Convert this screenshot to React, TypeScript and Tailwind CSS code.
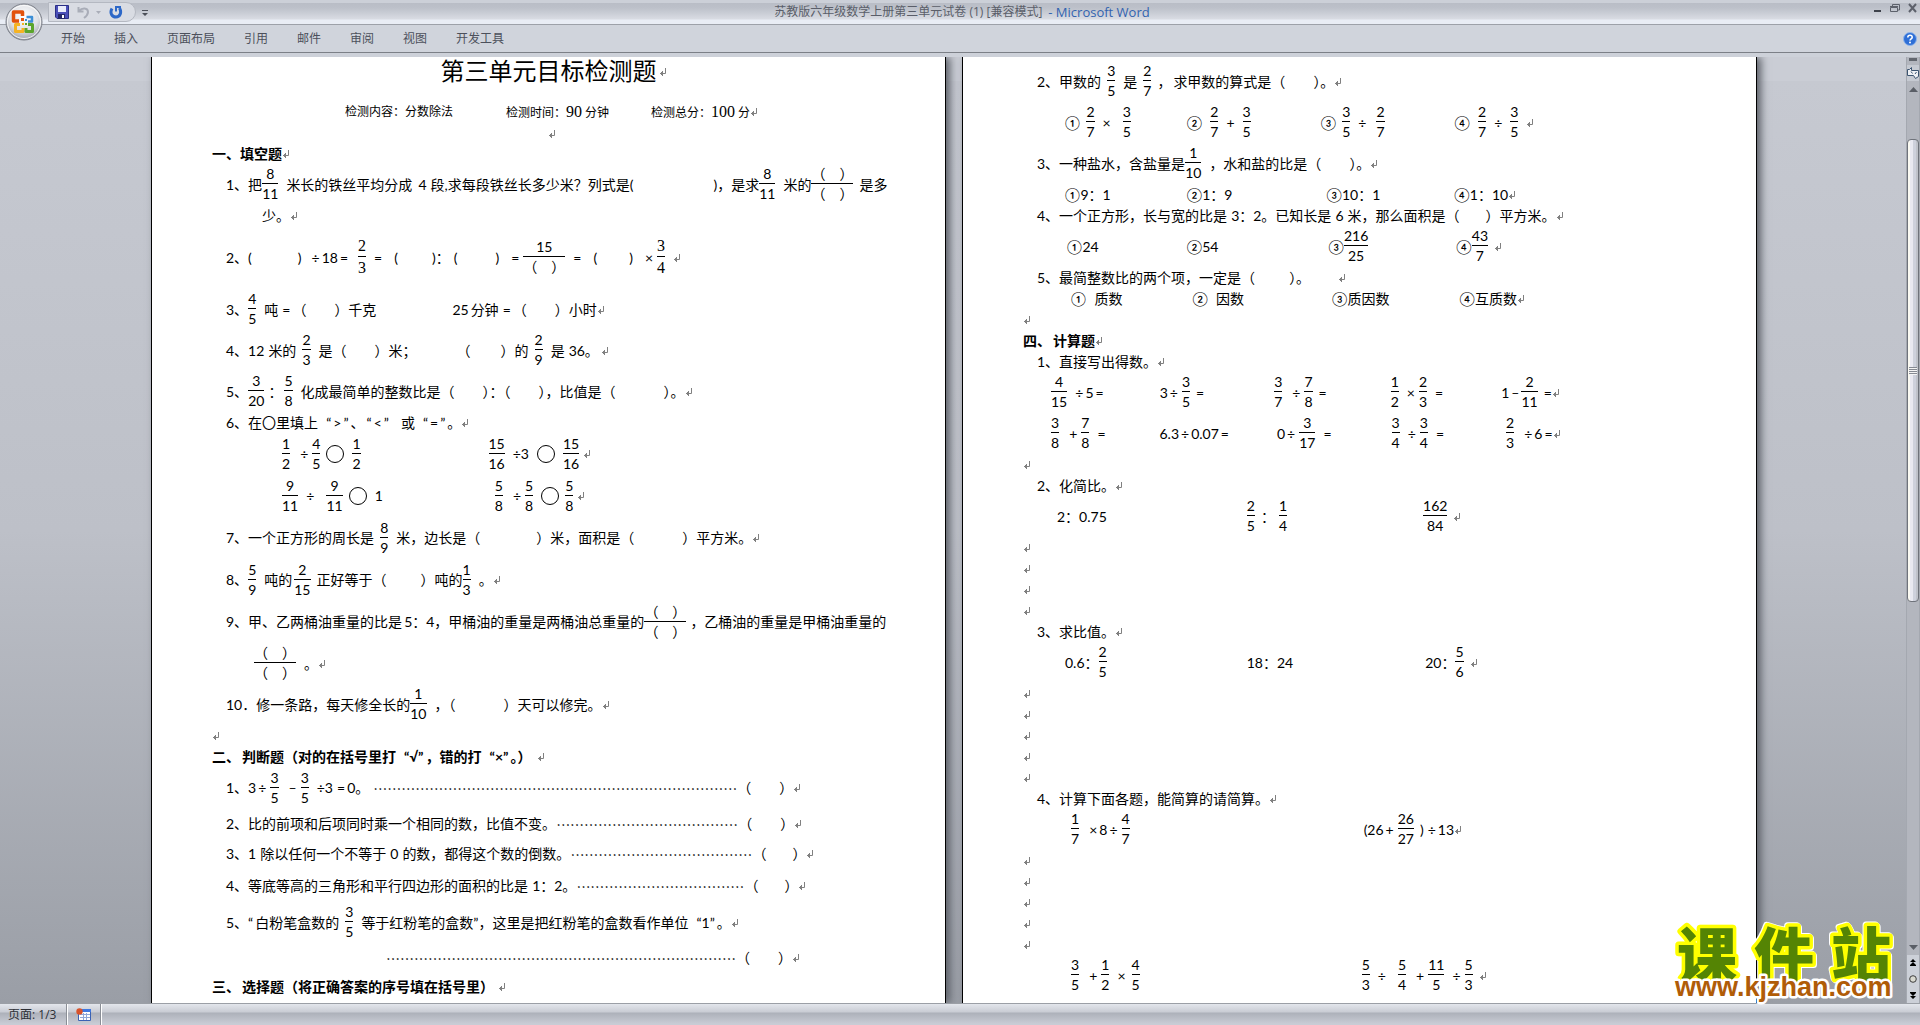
import { Fragment } from "react";
import { clsx } from "clsx";

const TABS = ["开始", "插入", "页面布局", "引用", "邮件", "审阅", "视图", "开发工具"];

type LineData = {
  text: string;
  /** "text" = one grid row, "frac" = row tall enough for a fraction. */
  size?: "text" | "frac" | "wide" | "tall" | "mid" | "loose";
  heading?: boolean;
};

const LINE_HEIGHT = {
  text: "h-[21px]",
  frac: "h-[41px]",
  wide: "h-[42px]",
  tall: "h-[63px]",
  mid: "h-[29px]",
  loose: "h-[32px]",
};

/**
 * Line markup: {a/b} is a fraction ({*a/b} the serif one), [n] a blank of n
 * pixels, ○ the circle to fill in, ↵ the paragraph mark.
 */
const LEFT_LINES: LineData[] = [
  { text: "一、填空题↵", heading: true },
  {
    text: "1、把{8/11}[8]米长的铁丝平均分成[6]4[4]段,求每段铁丝长多少米？列式是([80])，是求{8/11}[8]米的{（　）/（　）}[6]是多",
    size: "frac",
  },
  { text: "[36]少。↵" },
  {
    text: "2、([46])[10]÷[2]18[2]=[10]{*2/3}[8]=[12]([34])：[4]([38])[12]=[4]{15/（　）}[8]=[12]([32])[12]×[4]{*3/4}[8]↵",
    size: "tall",
  },
  { text: "3、{4/5}[8]吨[4]=[2]（[28]）千克[76]25[2]分钟[4]=[2]（[28]）小时↵", size: "frac" },
  { text: "4、12[4]米的[6]{2/3}[8]是（[28]）米；[40]（[30]）的[6]{2/9}[8]是[4]36。[2]↵", size: "frac" },
  { text: "5、{3/20}[4]：[2]{5/8}[8]化成最简单的整数比是（[28]）：（[28]），比值是（[48]）。↵", size: "frac" },
  { text: "6、在〇里填上[8]“[2]>[2]”[2]、[2]“[2]<[2]”[12]或[8]“[2]=[2]”[2]。↵" },
  { text: "[56]{1/2}[10]÷[4]{4/5}[6]○[8]{1/2}[128]{15/16}[8]÷3[8]○[8]{15/16}[4]↵", size: "wide" },
  { text: "[56]{9/11}[8]÷[12]{9/11}[6]○[8]1[112]{5/8}[10]÷[4]{5/8}[8]○[6]{5/8}[4]↵", size: "wide" },
  { text: "7、一个正方形的周长是[6]{8/9}[8]米，边长是（[56]）米，面积是（[48]）平方米。↵", size: "wide" },
  { text: "8、{5/9}[8]吨的[2]{2/15}[6]正好等于（[34]）吨的{1/3}[8]。↵", size: "wide" },
  {
    text: "9、甲、乙两桶油重量的比是[2]5：4，甲桶油的重量是两桶油总重量的{（　）/（　）}[4]，乙桶油的重量是甲桶油重量的",
    size: "wide",
  },
  { text: "[28]{（　）/（　）}[8]。↵", size: "frac" },
  { text: "10．修一条路，每天修全长的{1/10}[8]，（[48]）天可以修完。↵", size: "frac" },
  { text: "↵", heading: true },
  { text: "二、[2]判断题（对的在括号里打[8]“√”[2]，错的打[8]“×”[2]。）[6]↵", heading: true },
  { text: `1、3[2]÷[4]{3/5}[10]–[4]{3/5}[8]÷3[4]=[2]0。[4]${"…".repeat(26)}（[28]）↵`, size: "wide" },
  { text: `2、比的前项和后项同时乘一个相同的数，比值不变。${"…".repeat(13)}（[28]）↵`, size: "mid" },
  { text: `3、1[4]除以任何一个不等于[4]0[4]的数，都得这个数的倒数。${"…".repeat(13)}（[26]）↵`, size: "loose" },
  { text: `4、等底等高的三角形和平行四边形的面积的比是[4]1：2。${"…".repeat(12)}（[26]）↵`, size: "loose" },
  { text: "5、“[2]白粉笔盒数的[6]{3/5}[8]等于红粉笔的盒数”，这里是把红粉笔的盒数看作单位[8]“1”[2]。↵", size: "frac" },
  { text: `[160]${"…".repeat(25)}（[28]）↵`, size: "mid" },
  { text: "三、[2]选择题（将正确答案的序号填在括号里）[4]↵", size: "mid", heading: true },
  { text: "[170]{1/2}", size: "frac" },
];

const EMPTY: LineData = { text: "↵", heading: true };

const RIGHT_LINES: LineData[] = [
  { text: "2、甲数的[6]{3/5}[8]是[6]{2/7}[6]，[2]求甲数的算式是（[28]）。↵", size: "frac" },
  {
    text: "[28]①[6]{2/7}[8]×[12]{3/5}[56]②[8]{2/7}[8]+[8]{3/5}[70]③[6]{3/5}[8]÷[10]{2/7}[70]④[8]{2/7}[8]÷[8]{3/5}[8]↵",
    size: "frac",
  },
  { text: "3、一种盐水，含盐量是{1/10}[8]，水和盐的比是（[28]）。↵", size: "frac" },
  { text: "[28]①9：1[76]②1：9[94]③10：1[74]④1：10↵" },
  { text: "4、一个正方形，长与宽的比是[4]3：2。已知长是[4]6[4]米，那么面积是（[26]）平方米。↵" },
  { text: "[30]①24[88]②54[110]③{216/25}[88]④{43/7}[6]↵", size: "frac" },
  { text: "5、最简整数比的两个项，一定是（[34]）。[28]↵" },
  { text: "[34]①[8]质数[70]②[8]因数[88]③质因数[70]④互质数↵" },
  EMPTY,
  { text: "四、[2]计算题↵", heading: true },
  { text: "1、直接写出得数。↵" },
  {
    text: "[14]{4/15}[8]÷[2]5[2]=[56]3[2]÷[4]{3/5}[6]=[70]{3/7}[10]÷[4]{7/8}[6]=[64]{1/2}[8]×[4]{2/3}[8]=[58]1[2]–[2]{2/11}[6]=↵",
    size: "frac",
  },
  {
    text: "[14]{3/8}[10]+[4]{7/8}[8]=[54]6.3[2]÷[2]0.07[2]=[48]0[2]÷[4]{3/17}[8]=[60]{3/4}[8]÷[4]{3/4}[8]=[62]{2/3}[10]÷[2]6[2]=↵",
    size: "frac",
  },
  EMPTY,
  { text: "2、化简比。↵" },
  { text: "[20]2：0.75[140]{2/5}[6]：[4]{1/4}[136]{162/84}[6]↵", size: "frac" },
  EMPTY,
  EMPTY,
  EMPTY,
  EMPTY,
  { text: "3、求比值。↵" },
  { text: "[28]0.6：{2/5}[140]18：24[132]20：{5/6}[6]↵", size: "frac" },
  EMPTY,
  EMPTY,
  EMPTY,
  EMPTY,
  EMPTY,
  { text: "4、计算下面各题，能简算的请简算。↵" },
  { text: "[34]{1/7}[10]×[2]8[2]÷[4]{4/7}[234](26[2]+[4]{26/27}[6])[4]÷[2]13↵", size: "frac" },
  EMPTY,
  EMPTY,
  EMPTY,
  EMPTY,
  EMPTY,
  { text: "[34]{3/5}[10]+[4]{1/2}[8]×[6]{4/5}[222]{5/3}[8]÷[12]{5/4}[10]+[4]{11/5}[8]÷[4]{5/3}[6]↵", size: "frac" },
];

function ReturnMark() {
  return (
    <svg aria-hidden width="8" height="10" viewBox="0 0 8 10" className="shrink-0" fill="none" stroke="#808080">
      <path d="M6.5 1v5.5H1M3.5 4v5M2.5 5v3" />
    </svg>
  );
}

function Fraction({ value }: { value: string }) {
  const serif = value.startsWith("*");
  const [top, bottom] = value.replace("*", "").split("/");
  return (
    <span
      className={clsx(
        "mb-0.5 flex shrink-0 flex-col items-center",
        serif ? "font-['Liberation_Serif',serif] text-base leading-[21px]" : "leading-[19px]",
      )}
    >
      <span>{top}</span>
      <span className="h-px w-full bg-black" />
      <span>{bottom}</span>
    </span>
  );
}

function Piece({ part }: { part: string }) {
  if (part === "↵") return <ReturnMark />;
  if (part === "○") return <span className="size-[18px] shrink-0 rounded-full border border-black" />;
  if (part.startsWith("{")) return <Fraction value={part.slice(1, -1)} />;
  if (part.startsWith("[")) return <span className="shrink-0" style={{ width: Number(part.slice(1, -1)) }} />;
  if (part.startsWith("…")) return <span className="font-['Noto_Sans_CJK_SC',sans-serif]">{part}</span>;
  return <span>{part}</span>;
}

function Line({ text, size = "text", heading }: LineData) {
  const parts = text.split(/(\{[^}]*\}|\[\d+\]|↵|○|…+)/).filter(Boolean);
  return (
    <div
      className={clsx(
        "flex shrink-0 items-center whitespace-pre",
        LINE_HEIGHT[size],
        heading ? "font-bold" : "pl-3.5",
      )}
    >
      {parts.map((part, i) => (
        <Fragment key={i}>
          <Piece part={part} />
        </Fragment>
      ))}
    </div>
  );
}

function Paper({ children }: { children: React.ReactNode }) {
  return (
    <article className="w-[795px] shrink-0 overflow-hidden border-x border-black bg-white pl-[60px] text-sm text-black shadow-[4px_0_8px_#5c6068]">
      {children}
    </article>
  );
}

function OfficeButton() {
  return (
    <button type="button" aria-label="Office 按钮" className="absolute top-[3px] left-[5px] z-10 size-[38px]">
      <svg viewBox="0 0 38 38" className="size-full">
        <defs>
          <radialGradient id="orb" cx="50%" cy="35%" r="65%">
            <stop offset="0" stopColor="#ffffff" />
            <stop offset="0.6" stopColor="#dfe1e6" />
            <stop offset="1" stopColor="#9da1aa" />
          </radialGradient>
        </defs>
        <circle cx="19" cy="19" r="18" fill="url(#orb)" stroke="#7c8089" />
        <circle cx="19" cy="19" r="16.5" fill="none" stroke="#fff" strokeOpacity="0.8" />
        <g fill="none" strokeWidth="3.500" strokeLinejoin="round">
          <path d="M14 18H8.500V9H17.500V13" stroke="#e2520c" />
          <path d="M21.500 14H27V18.500H23" stroke="#3d8fd6" strokeWidth="2.500" />
          <path d="M15 21.500H10.500V28.500H18V25" stroke="#f5b323" strokeWidth="3" />
          <path d="M23 21.500H27.500V28.500H21V25" stroke="#5ba52c" strokeWidth="3" />
        </g>
        <g>
          <rect x="16" y="15" width="3" height="3" fill="#e2520c" />
          <rect x="20" y="16" width="2" height="2" fill="#3d8fd6" />
          <rect x="17" y="20" width="2" height="2" fill="#f5b323" />
          <rect x="20" y="20" width="2" height="2" fill="#5ba52c" />
        </g>
      </svg>
    </button>
  );
}

function QuickAccess() {
  return (
    <div className="flex h-5 items-center rounded-r-full border border-[#b4b8c1] bg-[#d9dce3] pr-3 pl-1.5">
      <button type="button" aria-label="保存">
        <svg width="14" height="14" viewBox="0 0 14 14">
          <path d="M0.500 0.500H13.500V13.500H2L0.500 12Z" fill="#4a4fb8" stroke="#2b2f86" />
          <path d="M3 1H11V7H3Z" fill="#e9ecfb" />
          <path d="M3 9H10V14H3Z" fill="#23276b" />
          <path d="M7 10H9V13H7Z" fill="#fff" />
        </svg>
      </button>
      <button type="button" aria-label="撤消" className="ml-2">
        <svg width="13" height="13" viewBox="0 0 13 13" fill="none" stroke="#a9adb8" strokeWidth="2">
          <path d="M1.500 1V5.500H6.500M2 5C5 1.500 11 1.500 11 6C11 9 9 10.500 7 12" />
        </svg>
      </button>
      <svg aria-hidden width="5" height="3" className="ml-1.5" fill="#a9adb8">
        <path d="M0 0h5L2.500 3z" />
      </svg>
      <button type="button" aria-label="恢复" className="ml-2">
        <svg width="14" height="14" viewBox="0 0 14 14" fill="none" stroke="#2d68c8" strokeWidth="3">
          <path d="M3 3.500C0.500 8 3 12 7 12S13 7.500 10.500 3" />
          <path d="M7 6.500V2H12" strokeWidth="2" />
        </svg>
      </button>
    </div>
  );
}

function TitleBar() {
  return (
    <header className="relative flex h-[25px] shrink-0 items-start border-b border-[#9da1a9] bg-[linear-gradient(#ccd0d8_0,#ccd0d8_3px,#b9bdc6_3px,#bdc1ca_8px,#c9cdd5_13px,#d9dce3_19px,#e9edf5_20px)] pt-0.5 pl-12">
      <QuickAccess />
      <button type="button" aria-label="自定义快速访问工具栏" className="mt-2 ml-1.5">
        <svg width="6" height="6" viewBox="0 0 6 6" fill="#4b4f58">
          <path d="M0 0h6v1H0zM0 3h6L3 6z" />
        </svg>
      </button>
      <h1 className="absolute inset-x-0 top-0.5 flex justify-center gap-1.5 pl-1 text-xs leading-5 text-[#5a5e69]">
        <span>苏教版六年级数学上册第三单元试卷 (1) [兼容模式]</span>
        <span className="text-[13px] text-[#3263b0]">- Microsoft Word</span>
      </h1>
      <div className="absolute top-[3px] right-[3px] flex items-center gap-2">
        <button type="button" aria-label="最小化">
          <svg width="9" height="10" viewBox="0 0 9 10">
            <path d="M1 7h7v2H1z" fill="#3e424b" />
          </svg>
        </button>
        <button type="button" aria-label="还原">
          <svg width="10" height="10" viewBox="0 0 10 10" fill="none" stroke="#5d616b">
            <path d="M2.500 3V1.500H9.500V7H8M0.500 4.500H7.500V8.500H0.500ZM0 3.500H8" />
          </svg>
        </button>
        <button type="button" aria-label="关闭">
          <svg width="9" height="10" viewBox="0 0 9 10" fill="none" stroke="#5d616b" strokeWidth="2">
            <path d="M1 1L8 9M8 1L1 9" />
          </svg>
        </button>
      </div>
    </header>
  );
}

function RibbonTabs() {
  return (
    <nav className="flex h-7 shrink-0 items-center border-b border-[#7c8087] bg-[#d0d4dc] pr-[3px] pl-[61px]">
      <div role="tablist" className="flex gap-[29px] text-xs text-[#4c505b]">
        {TABS.map((tab) => (
          <button key={tab} type="button" role="tab">
            {tab}
          </button>
        ))}
      </div>
      <button type="button" aria-label="帮助" className="ml-auto">
        <svg width="14" height="14" viewBox="0 0 14 14">
          <circle cx="7" cy="7" r="6.500" fill="#2f6fd6" stroke="#8fb4ea" />
          <path d="M4.800 5.400C4.800 2.600 9.200 2.600 9.200 5.200C9.200 6.800 7 6.800 7 8.500" fill="none" stroke="#fff" strokeWidth="1.600" />
          <circle cx="7" cy="10.600" r="1" fill="#fff" />
        </svg>
      </button>
    </nav>
  );
}

function ScrollBar() {
  return (
    <aside className="flex w-3.5 shrink-0 flex-col items-center border-x border-[#a4a8b0] bg-[#b3b6be]">
      <span className="mt-px mb-1 h-[3px] w-2 shrink-0 bg-[#62666e]" />
      <button type="button" aria-label="标尺" className="flex h-4 w-full shrink-0 items-center justify-center bg-[#c6cad2]">
        <svg width="12" height="12" viewBox="0 0 12 12" fill="#eef0f4" stroke="#3c5470">
          <path d="M0.500 2.500H2.500L4.500 0.500V3.500H11.500V9.500L8.500 11.500L6.500 8.500H0.500Z" />
          <path d="M4 4.500L5.500 6.500M8 7L9.500 5" />
        </svg>
      </button>
      <button type="button" aria-label="向上滚动" className="flex h-4 w-full shrink-0 items-center justify-center">
        <svg width="9" height="5" viewBox="0 0 9 5" fill="#5a5e66">
          <path d="M0 5L4.500 0L9 5z" />
        </svg>
      </button>
      <div className="flex w-full flex-1 flex-col">
        <div className="basis-[5%]" />
        <div className="flex basis-[55%] items-center justify-center rounded-sm border border-[#6f737b] bg-[linear-gradient(90deg,#fbfaf2_0_25%,#e9e9f1_25%_50%,#ced1dc_50%_85%,#bfc2ca_85%)]">
          <span className="h-2 w-2 bg-[repeating-linear-gradient(#858992_0_1px,#f4f4f4_1px_2px)]" />
        </div>
      </div>
      <button type="button" aria-label="向下滚动" className="flex h-4 w-full shrink-0 items-center justify-center">
        <svg width="9" height="5" viewBox="0 0 9 5" fill="#5a5e66">
          <path d="M0 0L4.500 5L9 0z" />
        </svg>
      </button>
      <div className="flex h-12 w-full shrink-0 flex-col items-center justify-around bg-[#ccd0d8]">
        <button type="button" aria-label="前一页">
          <svg width="6" height="7" viewBox="0 0 6 7" fill="#000">
            <path d="M3 0L6 3H0zM3 3L6 6H0zM0 6h6v1H0z" />
          </svg>
        </button>
        <button type="button" aria-label="选择浏览对象">
          <svg width="8" height="8" viewBox="0 0 8 8">
            <circle cx="4" cy="4" r="3.300" fill="#d9d9d0" stroke="#3d3d3d" />
          </svg>
        </button>
        <button type="button" aria-label="下一页">
          <svg width="6" height="7" viewBox="0 0 6 7" fill="#000">
            <path d="M3 7L6 4H0zM3 4L6 1H0zM0 0h6v1H0z" />
          </svg>
        </button>
      </div>
    </aside>
  );
}

function StatusBar() {
  return (
    <footer className="flex h-[22px] shrink-0 items-stretch border-t border-[#9b9fa6] bg-[linear-gradient(#e3e6ec_0,#c9ccd4_8px,#adb1ba_9px,#c9ccd5_20px)] text-xs text-[#2c2f36]">
      <span className="flex items-center border-r border-[#8a8e96] pr-2.5 pl-2">页面: 1/3</span>
      <button type="button" aria-label="宏录制" className="flex items-center border-r border-l border-r-[#8a8e96] border-l-white px-2">
        <svg width="16" height="14" viewBox="0 0 16 14">
          <path d="M2.500 1.500H14.500V12.500H2.500Z" fill="#fff" stroke="#3a62b4" />
          <path d="M3 1H15V4H3Z" fill="#3f78e0" />
          <path d="M4 6.500H14M4 9.500H14M7.500 5V12M10.500 5V12" stroke="#8fa8d8" />
          <circle cx="3.500" cy="3.500" r="3.200" fill="#d8532c" />
        </svg>
      </button>
      <span className="border-l border-white" />
    </footer>
  );
}

function SiteLogo() {
  return (
    <svg
      role="img"
      aria-label="课件站"
      viewBox="0 0 240 90"
      className="pointer-events-none absolute right-[14px] bottom-[15px] w-60 overflow-visible"
    >
      <g
        className="font-['Noto_Sans_CJK_SC',sans-serif] text-[60px] font-black [filter:drop-shadow(1px_1px_0_#fff)_drop-shadow(-1px_-1px_0_#fff)]"
        fill="#548404"
        stroke="#ffff00"
        strokeWidth="7"
        strokeLinejoin="round"
        paintOrder="stroke"
        textAnchor="middle"
      >
        <text x="41" y="58">课</text>
        <text x="118" y="58">件</text>
        <text x="195" y="58">站</text>
      </g>
      <text
        x="9"
        y="76"
        fill="#b05c08"
        stroke="#fff"
        strokeWidth="5"
        strokeLinejoin="round"
        paintOrder="stroke"
        className="font-['Liberation_Sans',sans-serif] text-[27px] font-bold"
      >
        www.kjzhan.com
      </text>
    </svg>
  );
}

export default function App() {
  return (
    <div
      lang="zh-CN"
      className="relative flex h-screen flex-col overflow-hidden bg-[#cdd1d9] font-['Open_Sans','Noto_Sans_CJK_SC',sans-serif]"
    >
      <OfficeButton />
      <TitleBar />
      <RibbonTabs />
      <div className="flex min-h-0 flex-1 pt-1">
        <main className="flex min-w-0 flex-1 justify-center gap-4 overflow-hidden bg-[linear-gradient(#cacdd5_0,#cacdd5_24px,#c6c9d1_24px,#bdc0c8_50%,#9a9ea6)] pl-0.5 font-['Lato','Noto_Sans_CJK_SC',sans-serif]">
          <Paper>
            <h2 className="-ml-[60px] flex h-[30px] items-center justify-center gap-0.5 pl-2.5 font-['Liberation_Serif','Noto_Sans_CJK_SC',sans-serif] text-2xl">
              第三单元目标检测题
              <ReturnMark />
            </h2>
            <div className="flex h-[50px] items-center pl-[133px] font-['Liberation_Serif','Noto_Sans_CJK_SC',serif] text-xs">
              <span className="w-[161px]">检测内容：分数除法</span>
              <span className="w-[145px]">
                检测时间：<span className="text-base">90</span> 分钟
              </span>
              <span>
                检测总分：<span className="text-base">100</span> 分
              </span>
              <ReturnMark />
            </div>
            <div className="-mt-2 flex h-3.5 pl-[336px]">
              <ReturnMark />
            </div>
            {LEFT_LINES.map((line, i) => (
              <Line key={i} {...line} />
            ))}
          </Paper>
          <Paper>
            <div className="pt-1">
              {RIGHT_LINES.map((line, i) => (
                <Line key={i} {...line} />
              ))}
            </div>
          </Paper>
        </main>
        <ScrollBar />
      </div>
      <StatusBar />
      <SiteLogo />
    </div>
  );
}
